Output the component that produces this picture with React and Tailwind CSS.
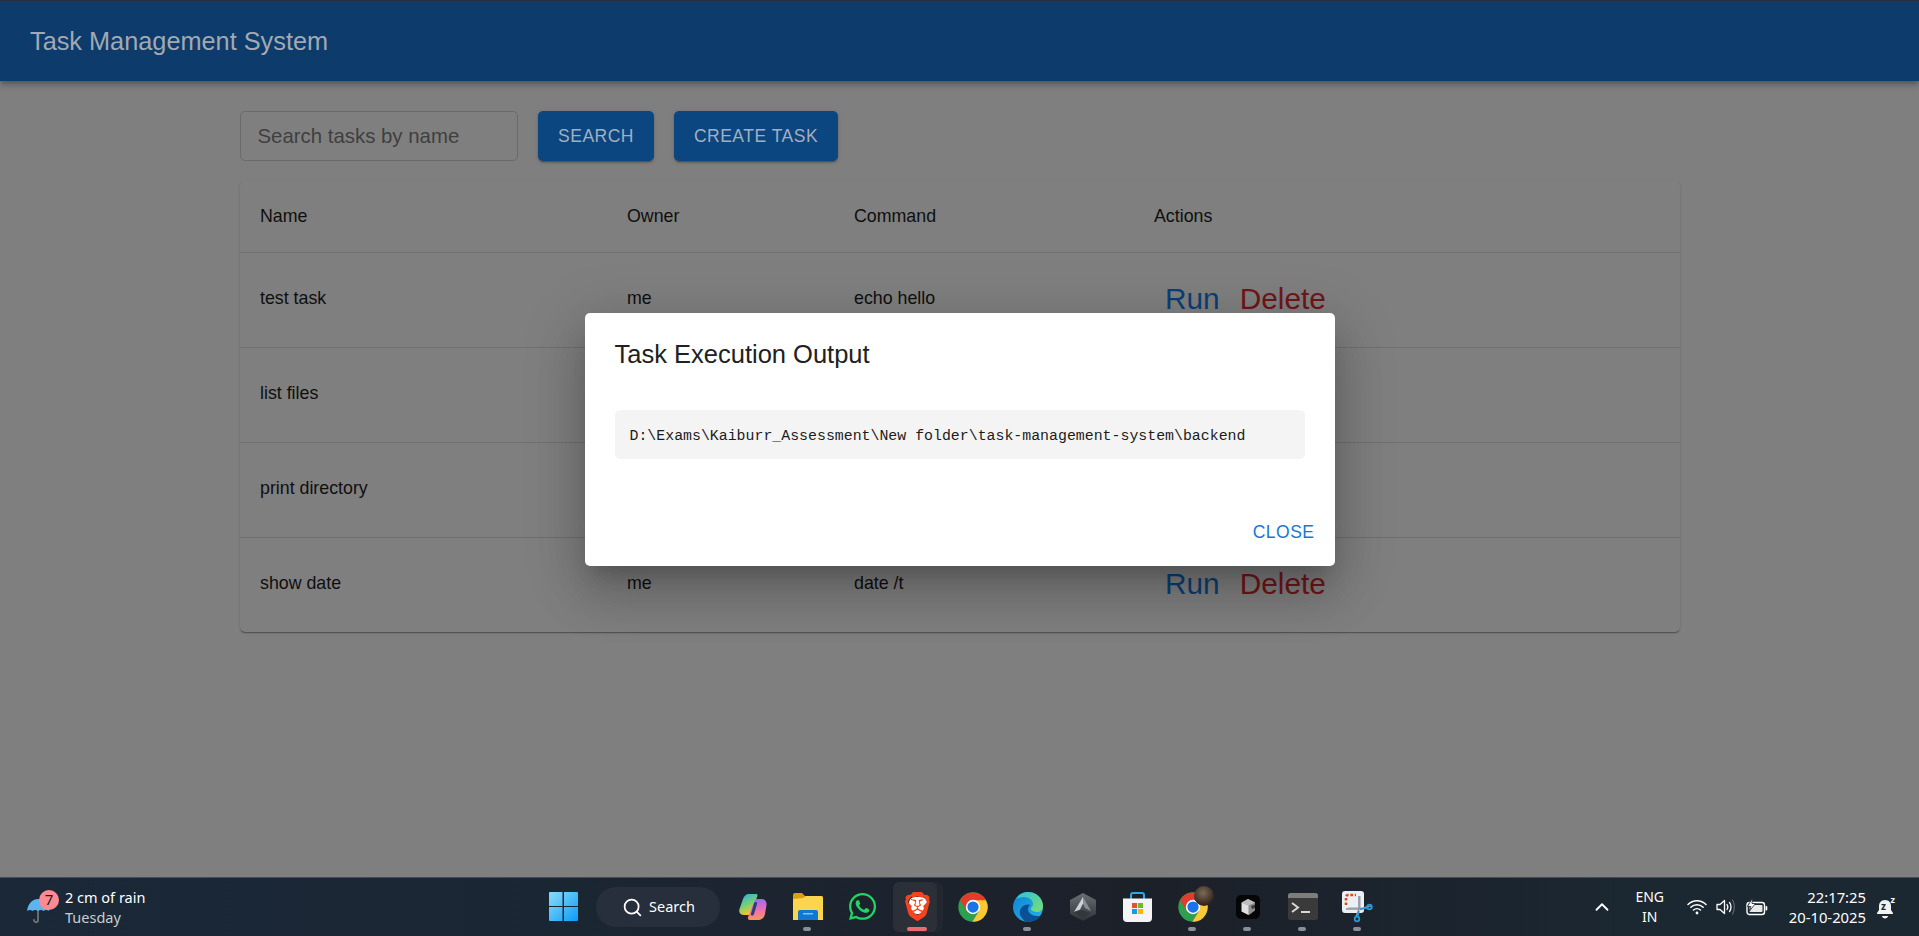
import { Search, ChevronUp } from "lucide-react";
import { FaWhatsapp } from "react-icons/fa";
import { SiBrave } from "react-icons/si";

const tasks = [
  { name: "test task", owner: "me", command: "echo hello" },
  { name: "list files", owner: "me", command: "dir" },
  { name: "print directory", owner: "me", command: "cd" },
  { name: "show date", owner: "me", command: "date /t" },
];

const Umbrella = () => (
  <svg width="24" height="30" viewBox="0 0 24 30">
    <path d="M12 12v12c0 3-4 3-4 0" fill="none" stroke="#6f7478" strokeWidth="1.8" strokeLinecap="round" />
    <path d="M1 15C2 7 7 3 12 3s10 4 11 12c-2-1.500-4-1.500-5.500 0-1.500-1.500-3.500-1.500-5.500 0-2-1.500-4-1.500-5.500 0C5 13.500 3 13.500 1 15z" fill="#5fb4ee" />
  </svg>
);

const WindowsLogo = () => (
  <svg width="29" height="29" viewBox="0 0 29 29">
    <defs>
      <linearGradient id="win" x1="0" y1="0" x2="1" y2="1">
        <stop offset="0" stopColor="#8adcfb" />
        <stop offset="1" stopColor="#0a9cf5" />
      </linearGradient>
    </defs>
    <path d="M1 0h12.500v14H0V1a1 1 0 0 1 1-1zM15 0h13a1 1 0 0 1 1 1v13H15zM0 15h13.500v14H1a1 1 0 0 1-1-1zM15 15h14v13a1 1 0 0 1-1 1H15z" fill="url(#win)" />
  </svg>
);

const Copilot = () => (
  <svg width="28" height="28" viewBox="0 0 28 28">
    <defs>
      <linearGradient id="copL" x1="0" y1="0" x2="0.4" y2="1">
        <stop offset="0" stopColor="#2fa6f0" />
        <stop offset="0.55" stopColor="#6fd07a" />
        <stop offset="1" stopColor="#f4c52e" />
      </linearGradient>
      <linearGradient id="copR" x1="0.5" y1="0" x2="0.6" y2="1">
        <stop offset="0" stopColor="#9a6bf0" />
        <stop offset="0.55" stopColor="#ef6fb0" />
        <stop offset="1" stopColor="#f79a55" />
      </linearGradient>
    </defs>
    <path d="M10 1h7c2 0 1.500 2 1 3l-5 15c-.5 2-2 3-4 3H5c-4 0-5.500-3-4.500-6L4 6c1-3 3-5 6-5z" fill="url(#copL)" />
    <path d="M18 6h5c3 0 5 3 4.500 6l-1.500 9c-.7 3.500-3 6-6.500 6H11c-2 0-2.500-1.500-2-3l6-15c.5-1.500 1.500-3 3-3z" fill="url(#copR)" />
    <path d="M17 9c1 0 1.500 1 1 2l-3 10c-.3 1-1 1.500-2 1.500s-1.500-1-1-2l3-10c.3-1 1-1.500 2-1.500z" fill="#27407a" />
  </svg>
);

const FolderIcon = () => (
  <svg width="30" height="28" viewBox="0 0 30 28">
    <path d="M0 2a2 2 0 0 1 2-2h7l3 3h16a2 2 0 0 1 2 2v4H0z" fill="#d9a011" />
    <path d="M0 6l10-1 3-2h15a2 2 0 0 1 2 2v22H0z" fill="#fcd54f" />
    <path d="M5 19a2 2 0 0 1 2-2h16a2 2 0 0 1 2 2v8H5z" fill="#0f78d0" />
    <rect x="10" y="20" width="10" height="1.500" fill="#7cc4f5" />
  </svg>
);

const BraveIcon = () => (
  <span className="relative flex h-[30px] w-[30px] items-center justify-center">
    <span className="absolute left-[6px] top-[5px] h-[17px] w-[18px] rounded-md bg-white" />
    <SiBrave className="relative text-[#f4431f]" size={29} />
  </span>
);

const ChromeIcon = () => (
  <svg width="30" height="30" viewBox="0 0 48 48">
    <circle cx="24" cy="24" r="23.500" fill="#2f9e4f" />
    <path d="M43.900 12.500A23 23 0 0 1 23 47.500L34 30 24 12.500z" fill="#fcc934" />
    <path d="M3.500 13A23.500 23.500 0 0 1 44.500 13H24L14 30z" fill="#e33b2e" />
    <circle cx="24" cy="24" r="11.500" fill="#fff" />
    <circle cx="24" cy="24" r="9" fill="#1a73e8" />
  </svg>
);

const EdgeIcon = () => (
  <svg width="30" height="30" viewBox="0 0 30 30">
    <defs>
      <linearGradient id="edgeA" x1="0" y1="0" x2="1" y2="1">
        <stop offset="0" stopColor="#0f82d2" />
        <stop offset="1" stopColor="#27b4ea" />
      </linearGradient>
      <linearGradient id="edgeB" x1="0" y1="0" x2="1" y2="1">
        <stop offset="0" stopColor="#2cc0e0" />
        <stop offset="1" stopColor="#7ae06a" />
      </linearGradient>
    </defs>
    <circle cx="15" cy="15" r="15" fill="url(#edgeA)" />
    <path d="M3 7C6 2 10 0 15 0c8 0 15 6 15 14 0 4-3 6-6 6-2 0-6-1-6-3 0-2 2-2 2-5 0-4-4-7-9-7-4 0-6 1-8 2z" fill="url(#edgeB)" />
    <path d="M9 26c-3-3-3-8 0-11 2-2 6-3 8-2-1 1-2 2-2 4 0 4 4 7 9 7 2 0 3 0 4-1-2 4-7 7-13 7-2 0-4-1-6-4z" fill="#0b4f94" />
  </svg>
);

const HexIcon = () => (
  <svg width="26" height="28" viewBox="0 0 26 28">
    <defs>
      <linearGradient id="hexA" x1="0" y1="0" x2="0" y2="1">
        <stop offset="0" stopColor="#6a6f76" />
        <stop offset="1" stopColor="#2e3238" />
      </linearGradient>
    </defs>
    <path d="M13 0l13 7v14l-13 7-13-7V7z" fill="url(#hexA)" />
    <path d="M13 4L4 19l6-2.500 3-6z" fill="#cfd2d5" />
    <path d="M13 4l8 14-6-3-2-4.500z" fill="#8b8f95" />
    <path d="M4 19l8-2 9 3-8 5z" fill="#33373d" />
  </svg>
);

const StoreIcon = () => (
  <svg width="29" height="30" viewBox="0 0 29 30">
    <path d="M8 7V3a2 2 0 0 1 2-2h9a2 2 0 0 1 2 2v4" fill="none" stroke="#2fa8e8" strokeWidth="2" />
    <path d="M0 6.500h29V26a4 4 0 0 1-4 4H4a4 4 0 0 1-4-4z" fill="#f4f4f4" />
    <rect x="9" y="11" width="5" height="5" fill="#e8502c" />
    <rect x="15" y="11" width="5" height="5" fill="#6cbb2a" />
    <rect x="9" y="17" width="5" height="5" fill="#0aa1ee" />
    <rect x="15" y="17" width="5" height="5" fill="#fbb800" />
  </svg>
);

const BlackCube = () => (
  <svg width="24" height="24" viewBox="0 0 24 24">
    <rect width="24" height="24" rx="5" fill="#060606" />
    <path d="M12 4l7 3.500v8L13 20l-7-3.500v-9z" fill="#8e8e8e" />
    <path d="M5.500 7.500l7 3V20l-7-3.500z" fill="#e0e0e0" />
    <path d="M12 4l7 3.500-6.500 3-7-3z" fill="#bdbdbd" />
    <path d="M15 11l4-1.500V13l-3 1z" fill="#3c3c3c" />
  </svg>
);

const TerminalIcon = () => (
  <svg width="30" height="27" viewBox="0 0 30 27">
    <rect width="30" height="27" rx="2.500" fill="#3a3a3a" />
    <path d="M0 2.500A2.500 2.500 0 0 1 2.500 0h25A2.500 2.500 0 0 1 30 2.500V5H0z" fill="#7d7d7d" />
    <path d="M4 10l6 4.500-6 4.500" fill="none" stroke="#d8d8d8" strokeWidth="2" />
    <rect x="13" y="18" width="9" height="2" fill="#d8d8d8" />
  </svg>
);

const SnipIcon = () => (
  <svg width="32" height="32" viewBox="0 0 32 32">
    <rect x="0" y="0" width="22" height="22" rx="3" fill="#eceff3" />
    <path d="M4 14V6a2 2 0 0 1 2-2h8" fill="none" stroke="#d84a1b" strokeWidth="2.600" strokeDasharray="2.600 1.800" />
    <path d="M6 17h12V5" fill="none" stroke="#b4b8bd" strokeWidth="1.500" />
    <path d="M4 18h13l12-3M17 5v13l-3 8" fill="none" stroke="#8f959b" strokeWidth="1.600" />
    <circle cx="27.500" cy="16" r="2.300" fill="none" stroke="#1b9ce0" strokeWidth="1.800" />
    <circle cx="15" cy="28" r="2.300" fill="none" stroke="#1b9ce0" strokeWidth="1.800" />
    <path d="M18 18.500l7.500-1.800M17 20l-1.500 6" stroke="#1b9ce0" strokeWidth="1.600" />
  </svg>
);

const Wifi = () => (
  <svg width="20" height="16" viewBox="0 0 20 16" fill="none" stroke="#fff" strokeWidth="1.500" strokeLinecap="round">
    <path d="M1 5.500c5-5 13-5 18 0" />
    <path d="M3.800 8.300c3.500-3.300 8.900-3.300 12.400 0" />
    <path d="M6.500 11c2-1.800 5-1.800 7 0" />
    <circle cx="10" cy="14" r="1.400" fill="#fff" stroke="none" />
  </svg>
);

const Volume = () => (
  <svg width="20" height="18" viewBox="0 0 20 18" fill="none" stroke="#fff" strokeWidth="1.300">
    <path d="M1 6.500h3L8.500 2.500v13L4 11.500H1z" strokeLinejoin="round" />
    <path d="M11 6.500c1 1.500 1 3.500 0 5M13.500 4.500c2 2.500 2 6.500 0 9" strokeLinecap="round" />
    <path d="M16.500 2c2.500 4 2.500 10 0 14" stroke="#5a6168" strokeLinecap="round" />
  </svg>
);

const Battery = () => (
  <svg width="22" height="18" viewBox="0 0 22 18">
    <rect x="1" y="4.500" width="17.500" height="12" rx="2.500" fill="none" stroke="#fff" strokeWidth="1.400" />
    <rect x="3.500" y="7" width="13" height="7" rx="1" fill="#e8e8e8" />
    <rect x="19.500" y="8" width="1.800" height="4.500" rx=".8" fill="#fff" />
    <path d="M6.500 0L1.500 8.500H5L3.500 13 9.500 5.500H6z" fill="#fff" stroke="#1b2731" strokeWidth=".8" />
  </svg>
);

const BellSleep = () => (
  <span className="relative flex h-[24px] w-[20px] items-end justify-center">
    <svg width="18" height="20" viewBox="0 0 18 20">
      <path d="M9 1c4 0 6 3 6 6v4l2 3v1H1v-1l2-3V7c0-3 2-6 6-6z" fill="#f2f2f2" />
      <path d="M6 17h6c0 1.500-1.500 2.500-3 2.500S6 18.500 6 17z" fill="#f2f2f2" />
    </svg>
    <span className="absolute left-[6px] top-[6px] font-['Noto_Sans',sans-serif] text-[10px] font-bold leading-none text-[#1b2731]">z</span>
    <span className="absolute right-[0px] top-[0px] font-['Noto_Sans',sans-serif] text-[9px] font-bold leading-none text-white">z</span>
  </span>
);

const TaskbarItem = ({ children, running, active }) => (
  <div className="relative flex h-full w-[55px] items-center justify-center pb-[1px]">
    {active && (
      <>
        <div className="absolute left-[9px] top-[4px] h-[50px] w-[44px] rounded-[6px] bg-[#22262f]" />
        <div className="absolute left-[3px] top-[4px] h-[50px] w-[44px] rounded-[6px] bg-[#2b2f38]" />
      </>
    )}
    <div className="relative flex items-center justify-center">{children}</div>
    {running && <div className="absolute bottom-[5px] left-[23px] h-[4px] w-[8px] rounded-full bg-[#8a8f96]" />}
    {active && <div className="absolute bottom-[5px] left-[17px] h-[4px] w-[20px] rounded-full bg-[#ef6a70]" />}
  </div>
);

const Taskbar = () => (
  <footer className="flex h-[59px] shrink-0 items-center border-t border-[#454c53] bg-[linear-gradient(90deg,#1a2838_0%,#1b2633_30%,#1c222c_50%,#1c2029_60%,#1b2731_85%,#1b2731_100%)] font-['Noto_Sans',sans-serif] text-white">
    <div className="flex h-full w-[536px] shrink-0 items-center pl-[26px]">
      <div className="relative mr-[3px] mt-[7px] flex h-[40px] w-[36px] items-center">
        <Umbrella />
        <span className="absolute left-[13px] top-[-1px] flex h-[20px] w-[20px] items-center justify-center rounded-full bg-[#ff8a94] text-[15px] text-[#1b1b1b]">7</span>
      </div>
      <div className="flex flex-col text-[14.500px] leading-[20px]">
        <span>2 cm of rain</span>
        <span className="text-[#c9cdd1]">Tuesday</span>
      </div>
    </div>
    <TaskbarItem><WindowsLogo /></TaskbarItem>
    <div className="ml-[5px] mr-[5px] flex h-[40px] w-[124px] items-center justify-center gap-[6px] rounded-full bg-[#262f3b] pl-[1px] text-[14.500px]">
      <Search size={21} strokeWidth={2} color="#fff" />
      <span>Search</span>
    </div>
    <TaskbarItem><Copilot /></TaskbarItem>
    <TaskbarItem running><FolderIcon /></TaskbarItem>
    <TaskbarItem><FaWhatsapp size={31} color="#25d366" /></TaskbarItem>
    <TaskbarItem active><BraveIcon /></TaskbarItem>
    <TaskbarItem><ChromeIcon /></TaskbarItem>
    <TaskbarItem running><EdgeIcon /></TaskbarItem>
    <TaskbarItem><HexIcon /></TaskbarItem>
    <TaskbarItem><StoreIcon /></TaskbarItem>
    <TaskbarItem running>
      <ChromeIcon />
      <span className="absolute left-[16px] top-[-6px] h-[20px] w-[20px] rounded-full bg-[radial-gradient(circle_at_45%_35%,#7d6a58,#33251c_70%)]" />
    </TaskbarItem>
    <TaskbarItem running><BlackCube /></TaskbarItem>
    <TaskbarItem running><TerminalIcon /></TaskbarItem>
    <TaskbarItem running><SnipIcon /></TaskbarItem>
    <div className="ml-auto flex h-full items-center pr-[24px]">
      <ChevronUp size={22} strokeWidth={2} color="#fff" className="mr-[22px]" />
      <div className="mr-[22px] flex w-[30px] flex-col items-center text-[14px] leading-[20px]">
        <span>ENG</span>
        <span>IN</span>
      </div>
      <div className="mr-[9px]"><Wifi /></div>
      <div className="mr-[10px]"><Volume /></div>
      <div className="mr-[21px]"><Battery /></div>
      <div className="mr-[9px] flex flex-col items-end text-[14.800px] leading-[20px]">
        <span>22:17:25</span>
        <span>20-10-2025</span>
      </div>
      <BellSleep />
    </div>
  </footer>
);

const TaskDialog = () => (
  <div className="absolute inset-0 flex items-center justify-center pt-[2px]">
    <div className="h-[253px] w-[750px] rounded-[5px] bg-white px-[30px] pt-[21px] shadow-[0_14px_19px_-9px_rgba(0,0,0,0.2),0_30px_48px_4px_rgba(0,0,0,0.14),0_11px_58px_10px_rgba(0,0,0,0.12)]">
      <h2 className="text-[25.500px] leading-[40px] text-[#212121]">Task Execution Output</h2>
      <pre className="mt-[36px] h-[49px] rounded-[5px] bg-[#f4f4f4] px-[15px] font-['Liberation_Mono',monospace] text-[14.880px] leading-[52px] text-[#1c1c1c]">D:\Exams\Kaiburr_Assessment\New folder\task-management-system\backend</pre>
      <div className="mt-[59px] flex justify-end">
        <button className="mr-[-10px] text-[17.500px] leading-[28px] tracking-[0.5px] text-[#1976d2]">CLOSE</button>
      </div>
    </div>
  </div>
);

export default function App() {
  return (
    <div className="flex h-[936px] flex-col overflow-hidden bg-[#7f7f7f] font-['Liberation_Sans',Arial,sans-serif]">
      <div className="relative flex-1">
        <header className="flex h-[81px] items-center border-t border-[#2a3040] bg-[#0c3b6c] pl-[30px] pt-[1px] shadow-[0_2px_5px_-1px_rgba(0,0,0,0.2),0_4px_6px_0_rgba(0,0,0,0.14),0_1px_12px_0_rgba(0,0,0,0.12)]">
          <h1 className="text-[25.300px] text-[#a2a9b0]">Task Management System</h1>
        </header>
        <main className="ml-[240px] mr-[239px] pt-[30px]">
          <div className="flex gap-[20px]">
            <input
              placeholder="Search tasks by name"
              className="h-[50px] w-[278px] rounded-[5px] border border-[#6a6a6a] bg-transparent pl-[16.500px] pr-[10px] text-[20.400px] placeholder:text-[#3f3f3f] focus:outline-none"
              readOnly
            />
            <button className="h-[50px] w-[116px] rounded-[5px] bg-[#0b4680] text-[17.500px] tracking-[0.5px] text-[#a3afbe] shadow-[0_3px_1px_-2px_rgba(0,0,0,0.2),0_2px_2px_0_rgba(0,0,0,0.14),0_1px_5px_0_rgba(0,0,0,0.12)]">SEARCH</button>
            <button className="h-[50px] w-[164px] rounded-[5px] bg-[#0b4680] text-[17.500px] tracking-[0.5px] text-[#a3afbe] shadow-[0_3px_1px_-2px_rgba(0,0,0,0.2),0_2px_2px_0_rgba(0,0,0,0.14),0_1px_5px_0_rgba(0,0,0,0.12)]">CREATE TASK</button>
          </div>
          <div className="mt-[20px] rounded-[5px] shadow-[0_2px_1px_-1px_rgba(0,0,0,0.2),0_1px_1px_0_rgba(0,0,0,0.14),0_1px_3px_0_rgba(0,0,0,0.12)]">
            <table className="w-full table-fixed text-left text-[17.800px] text-[#0f0f0f]">
              <colgroup>
                <col className="w-[367px]" />
                <col className="w-[227px]" />
                <col className="w-[300px]" />
                <col />
              </colgroup>
              <thead>
                <tr className="h-[71px] border-b border-[#6f6f6f]">
                  <th className="pl-[20px] font-normal">Name</th>
                  <th className="pl-[20px] font-normal">Owner</th>
                  <th className="pl-[20px] font-normal">Command</th>
                  <th className="pl-[20px] font-normal">Actions</th>
                </tr>
              </thead>
              <tbody>
                {tasks.map((task) => (
                  <tr key={task.name} className="h-[95px] border-b border-[#6f6f6f] last:border-b-0">
                    <td className="pb-[2px] pl-[20px]">{task.name}</td>
                    <td className="pb-[2px] pl-[20px]">{task.owner}</td>
                    <td className="pb-[2px] pl-[20px]">{task.command}</td>
                    <td className="pl-[31px] text-[29.800px]">
                      <span className="mr-[20px] text-[#0b3f74]">Run</span>
                      <span className="text-[#701618]">Delete</span>
                    </td>
                  </tr>
                ))}
              </tbody>
            </table>
          </div>
        </main>
        <TaskDialog />
      </div>
      <Taskbar />
    </div>
  );
}
